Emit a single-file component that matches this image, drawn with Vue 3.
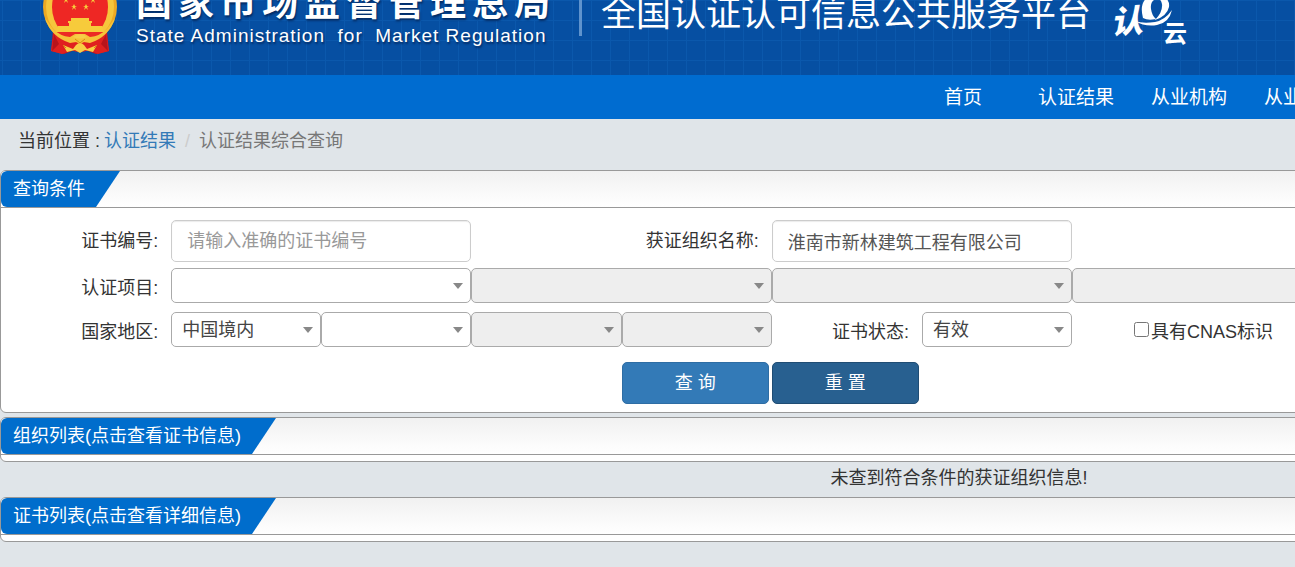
<!-- App.vue -->
<!-- Certification result search page -->
<template>
  <div class="page">
    <header class="banner">
      <svg class="emblem" viewBox="0 0 74 84" aria-hidden="true">
        <path d="M10 60h54l2 20-13 3-8-3h-16l-8 3-13-3z" fill="#c9171e" />
        <ellipse cx="37" cy="36" rx="37" ry="37" fill="#eda923" />
        <ellipse cx="37" cy="36" rx="34" ry="35" fill="#f6c63c" />
        <ellipse cx="37" cy="36" rx="28" ry="32" fill="#ee2724" />
        <g fill="#f7cb3b">
          <polygon v-for="s in stars" :key="s" :points="star" :transform="s" />
          <path d="M28 47h18v3h3v2h-1v3h-22v-3h-1v-2h3z" />
          <path d="M15 55h44l2 6h-48z" />
        </g>
        <path d="M13 61h48q-8 12-24 13q-16-1-24-13z" fill="#ec2a24" />
        <path d="M11 61l8 6q18 10 36 0l8-6 3 19-11 3-9-4q-9 4-18 0l-9 4-11-3z" fill="#e0201f" />
        <path d="M11 63l5 10-7 7zM63 63l-5 10 7 7z" fill="#b8141b" />
        <path d="M2 47q6 19 25 25l6-1 4 2 4-2 6 1q19-6 25-25l-8 11q-7 7-17 8l-5-3h-10l-5 3q-10-1-17-8z" fill="#f5c339" />
        <path d="M30 66q7-6 14 0q-7 3-14 0z" fill="#f7cf48" />
        <path d="M20 74l10 4 3-4q4-4 8 0l3 4 10-4-4 7-8-2-5 3-5-3-8 2z" fill="#f8cf45" />
        <path d="M32 68l5 4 5-4M20 74l3 3M54 74l-3 3" stroke="#d78c12" fill="none" />
      </svg>
      <div class="bureau">
        <div class="bureau-cn">国家市场监督管理总局</div>
        <div class="bureau-en">State Administration&nbsp; for&nbsp; Market Regulation</div>
      </div>
      <h1 class="platform">全国认证认可信息公共服务平台</h1>
      <svg class="cloud-logo" viewBox="0 0 78 54" aria-label="认云">
        <text class="logo-ren" x="0" y="38" transform="rotate(-4 16 34)">认</text>
        <path fill-rule="evenodd" d="M32 23q-4-15 5-21q7-5 15-1q7 4 6 11q-2 9-14 13q8-8 7-16q-1-6-6-5q-6 2-5 10q1 7 5 10q-8 2-13-1z" />
        <path d="M24 26q8 3 20 1q10-2 17-12q-3 13-15 15q-12 2-22-4z" />
        <text class="logo-yun" x="52" y="47">云</text>
      </svg>
    </header>

    <nav class="nav">
      <a v-for="item in navItems" :key="item" href="#">{{ item }}</a>
    </nav>

    <div class="content">
      <div class="crumbs">
        <span>当前位置 :</span>
        <a href="#">认证结果</a>
        <span class="slash">/</span>
        <span class="current">认证结果综合查询</span>
      </div>

      <section class="panel">
        <div class="panel-head"><h2 class="tab">查询条件</h2></div>
        <form class="search" @submit.prevent>
          <div class="row">
            <label for="certNo">证书编号:</label>
            <input id="certNo" v-model="certNo" class="text span-2" type="text" placeholder="请输入准确的证书编号" />
            <label for="orgName" class="span-2">获证组织名称:</label>
            <input id="orgName" v-model="orgName" class="text span-2" type="text" />
          </div>

          <div class="row selects">
            <label for="project0">认证项目:</label>
            <div v-for="n in 4" :key="n" class="select span-2">
              <select :id="'project' + (n - 1)" :disabled="n > 1" aria-label="认证项目"></select>
            </div>
          </div>

          <div class="row selects">
            <label for="region0">国家地区:</label>
            <div v-for="(r, i) in regions" :key="i" class="select">
              <select :id="'region' + i" :disabled="r.disabled" aria-label="国家地区">
                <option v-if="r.value">{{ r.value }}</option>
              </select>
            </div>
            <label for="status">证书状态:</label>
            <div class="select">
              <select id="status"><option>有效</option></select>
            </div>
            <div class="check span-2">
              <input id="cnas" v-model="cnas" type="checkbox" />
              <label for="cnas">具有CNAS标识</label>
            </div>
          </div>

          <div class="row actions">
            <button type="submit" class="btn">查 询</button>
            <button type="button" class="btn dark" @click="reset">重 置</button>
          </div>
        </form>
      </section>

      <section class="panel list">
        <div class="panel-head"><h2 class="tab">组织列表(点击查看证书信息)</h2></div>
      </section>
      <p class="empty">未查到符合条件的获证组织信息!</p>
      <section class="panel list">
        <div class="panel-head"><h2 class="tab">证书列表(点击查看详细信息)</h2></div>
      </section>
    </div>
  </div>
</template>

<script setup>
import { ref } from 'vue'

const navItems = ['首页', '认证结果', '从业机构', '从业人员']

const regions = [
  { value: '中国境内', disabled: false },
  { value: '', disabled: false },
  { value: '', disabled: true },
  { value: '', disabled: true },
]

const star = '0,-3 1,-1 3,-1 1,0 2,3 0,1 -2,3 -1,0 -3,-1 -1,-1'
const stars = [
  'translate(37 18) scale(2)',
  'translate(23 29)',
  'translate(50 29)',
  'translate(31 36)',
  'translate(43 36)',
]

const certNo = ref('')
const orgName = ref('淮南市新林建筑工程有限公司')
const cnas = ref(false)

function reset() {
  certNo.value = ''
  orgName.value = ''
  cnas.value = false
}
</script>

<style>
body {
  background: #e0e5e9;
}
</style>

<style scoped>
.page {
  overflow: hidden;
  font-family: "Liberation Sans", "Noto Sans CJK SC", sans-serif;
  font-size: 18px;
  line-height: 24px;
  color: #333;
}
.page * { box-sizing: border-box; }
a { text-decoration: none; }

/* Banner */
.banner {
  display: flex;
  align-items: flex-end;
  height: 75px;
  padding: 0 0 20px 43px;
  overflow: hidden;
  white-space: nowrap;
  color: #fff;
  background-color: #064fa2;
  background-image:
    linear-gradient(#0b58ac 1px, transparent 1px),
    linear-gradient(90deg, #0b58ac 1px, transparent 1px);
  background-size: 19px 20px;
  background-position: 2px 0;
}
.emblem {
  flex: none;
  width: 74px;
  height: 84px;
}
.bureau {
  flex: none;
  width: 443px;
  margin-left: 19px;
  padding-bottom: 7px;
  text-shadow: 1px 2px 2px rgba(0, 20, 60, 0.6);
}
.bureau-cn {
  font-size: 36px;
  line-height: 40px;
  font-weight: 700;
  letter-spacing: 6px;
}
.bureau-en {
  font-size: 19px;
  line-height: 24px;
  letter-spacing: 1px;
}
.platform {
  flex: none;
  margin: 0 0 19px;
  padding-left: 19px;
  border-left: 3px solid #5f93cd;
  font-size: 35px;
  line-height: 45px;
  font-weight: 400;
}
.cloud-logo {
  flex: none;
  width: 78px;
  height: 54px;
  margin: 0 0 6px 20px;
  overflow: visible;
  fill: #fff;
}
.logo-ren { font-size: 32px; font-weight: 900; font-style: italic; }
.logo-yun { font-size: 24px; font-weight: 700; }

/* Nav */
.nav {
  display: flex;
  height: 44px;
  padding: 1px 0 0 70%;
  background: #006cd0;
}
.nav a {
  flex: none;
  width: 113px;
  text-align: center;
  font-size: 19px;
  line-height: 44px;
  color: #fff;
}

.content { width: 148.1%; }

.crumbs {
  display: flex;
  gap: 4px;
  padding: 10px 18px 17px;
}
.crumbs a { color: #337ab7; }
.crumbs .slash { padding: 0 5px; color: #ccc; }
.crumbs .current { color: #777; }

/* Panels */
.panel {
  border: 1px solid #999;
  border-radius: 6px;
  background: #fff;
  overflow: hidden;
}
.panel-head {
  display: flex;
  border-bottom: 1px solid #999;
  background: linear-gradient(#f1f1f1, #fff);
}
.tab {
  margin: 0;
  padding: 1px 35px 1px 12px;
  border-radius: 6px 0 0 6px;
  font-size: 18px;
  line-height: 34px;
  font-weight: 400;
  color: #fff;
  background: #006dcc;
  clip-path: polygon(0 0, 100% 0, calc(100% - 24px) 100%, 0 100%);
}
.list { padding-bottom: 6px; }
.panel + .panel { margin-top: 4px; }
.empty {
  margin: 0;
  padding-bottom: 2px;
  line-height: 33px;
  text-align: center;
}

/* Search form */
.search { padding: 12px 94px 8px 20px; }
.row {
  display: grid;
  grid-template-columns: repeat(12, 1fr);
  align-items: center;
  margin-bottom: 6px;
}
.selects { margin-bottom: 9px; }
.span-2 { grid-column: span 2; }
.row > label {
  padding-right: 13px;
  text-align: right;
}
.selects label { padding-top: 5px; }
.text {
  width: 100%;
  height: 42px;
  padding: 0 15px;
  border: 1px solid #ccc;
  border-radius: 5px;
  box-shadow: inset 0 1px 1px rgba(0, 0, 0, 0.08);
  font: inherit;
  color: #555;
}
.text::placeholder { color: #999; }
.select { position: relative; }
.select::after {
  content: "";
  position: absolute;
  top: 15px;
  right: 8px;
  border: 5px solid transparent;
  border-top: 6px solid #888;
  border-bottom: 0;
  pointer-events: none;
}
.select select {
  display: block;
  appearance: none;
  width: 100%;
  height: 35px;
  padding: 0 10px;
  border: 1px solid #aaa;
  border-radius: 5px;
  background: #fff;
  font: inherit;
  color: #444;
}
.select select:disabled { background: #eee; opacity: 1; }
.check {
  display: flex;
  align-items: center;
  padding-left: 62px;
}
.check input {
  width: 15px;
  height: 15px;
  margin: 0 2px 0 0;
}
.row.actions { margin: 15px 0 0; }
.btn {
  height: 42px;
  margin-right: 3px;
  border: 1px solid #2e6da4;
  border-radius: 5px;
  background: #337ab7;
  font: inherit;
  color: #fff;
}
.btn:first-child { grid-column-start: 5; }
.btn.dark {
  border-color: #204d74;
  background: #286090;
}
</style>
